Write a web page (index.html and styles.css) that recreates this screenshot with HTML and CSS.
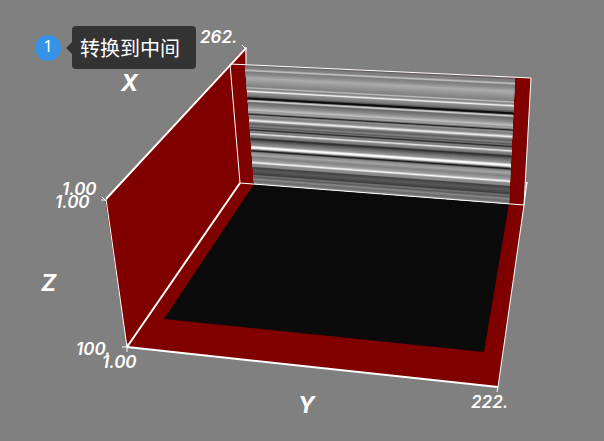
FILE: index.html
```html
<!DOCTYPE html>
<html lang="zh">
<head>
<meta charset="utf-8">
<title>转换到中间</title>
<link rel="stylesheet" href="styles.css">
</head>
<body>
<main class="viewer">
<svg class="scene" viewBox="0 0 604 441" role="img" aria-label="X Y Z">
  <g class="wall">
    <path d="M105 199L245 47L246 65L531 78L524 205L498 387L127 347Z"/>
  </g>
  <path class="bg" d="M246 40L246 64L531 78L531 40Z"/>
  <path class="floor" d="M254 184L509 204L484 352L164 319Z"/>
  <path class="base" d="M245 65L515 78L509 204L254 184Z"/>
  <g id="slice"></g>
  <g class="edges">
    <path class="thick" d="M106 199L246 48M127 347L240 183M127 347L498 387"/>
    <path d="M106 199L127 347M246 47L246 64M230 64L240 183L524 205M230 64L531 78L524 205L498 387M524 205L527 182L526 188"/>
    <path d="M242 45L246 49M101 200L106 200M102 197L106 201M122 347L130 347M127 343L127 352M498 387L497 392"/>
  </g>
  <g class="values">
    <text x="200" y="43">262.</text>
    <text x="62" y="195">1.00</text>
    <text x="55" y="208">1.00</text>
    <text x="76" y="355">100.</text>
    <text x="102" y="368">1.00</text>
    <text x="471" y="408">222.</text>
  </g>
  <g class="axes">
    <text x="121" y="91">X</text>
    <text x="41" y="291">Z</text>
    <text x="298" y="413">Y</text>
  </g>
</svg>
<div class="hint">
  <span class="badge">1</span>
  <div class="tooltip" role="tooltip">转换到中间</div>
</div>
</main>
<script src="slice.js"></script>
</body>
</html>
```
FILE: styles.css
```css
body {
  margin: 0;
  background: #808080;
  font-family: "Liberation Sans", "Noto Sans CJK SC", sans-serif;
}
.viewer { position: relative; }
.scene { display: block; width: 100%; height: auto; }
.wall { fill: #800000; }
.bg, .base { fill: #808080; }
.floor { fill: #0b0b0b; }
.edges { fill: none; stroke: #fff; stroke-width: 1; }
.thick { stroke-width: 2; }
.values, .axes { fill: #fff; font-family: Inter, sans-serif; font-style: italic; }
.values { font-size: 17px; font-weight: 600; }
.axes { font-size: 23px; font-weight: 700; }
.hint {
  position: absolute;
  top: 26px;
  left: 35px;
  display: flex;
  align-items: center;
  gap: 11px;
}
.badge {
  width: 26px;
  padding-bottom: 4px;
  border-radius: 50%;
  background: #3693e8;
  color: #fff;
  font: 16px/22px "Noto Sans", sans-serif;
  text-align: center;
}
.tooltip {
  position: relative;
  padding: 0 16px 0 8px;
  border-radius: 4px;
  background: #333;
  color: #fff;
  font: 20px/43px "Noto Sans CJK SC", sans-serif;
}
.tooltip::before {
  content: "";
  position: absolute;
  top: 16px;
  left: -6px;
  border: solid transparent;
  border-width: 6px 6px 6px 0;
  border-right-color: #333;
}
```
FILE: slice.js
```js
// Grey level at each depth of the slice, from 0 (top) to 378 (bottom).
const levels = [
  [0, 90], [6, 130], [11, 125], [17, 200], [21, 125], [30, 140], [40, 172],
  [48, 160], [60, 140], [68, 130], [72, 195], [76, 125], [79, 150], [83, 255],
  [87, 145], [96, 125], [101, 90], [104, 10], [108, 20], [111, 160], [114, 220],
  [118, 105], [126, 125], [134, 150], [142, 195], [146, 150], [150, 165],
  [153, 110], [156, 25], [160, 150], [166, 125], [170, 150], [176, 250],
  [181, 135], [187, 95], [193, 135], [198, 85], [201, 125], [205, 35],
  [210, 135], [214, 120], [218, 240], [223, 135], [229, 120], [234, 40],
  [240, 90], [248, 125], [255, 150], [260, 255], [264, 240], [268, 130],
  [272, 15], [277, 135], [285, 165], [293, 130], [304, 160], [310, 255],
  [314, 145], [322, 135], [325, 65], [335, 90], [342, 75], [347, 60],
  [350, 120], [356, 90], [362, 140], [368, 105], [378, 150]
];
const group = document.getElementById("slice");
const edge = t => [[245 + 9 * t, 65 + 119 * t], [515 - 6 * t, 78 + 126 * t]];
levels.slice(1).forEach(([end, high], i) => {
  const [start, low] = levels[i];
  for (let d = start; d < end; d++) {
    const level = Math.round(low + (high - low) * (d - start) / (end - start));
    const [a, b] = edge(d / 378);
    const [c, e] = edge(Math.min(1, (d + 4) / 378));
    const band = document.createElementNS("http://www.w3.org/2000/svg", "polygon");
    band.setAttribute("points", [a, b, e, c].join(" "));
    band.setAttribute("fill", `rgb(${level},${level},${level})`);
    group.append(band);
  }
});
```
